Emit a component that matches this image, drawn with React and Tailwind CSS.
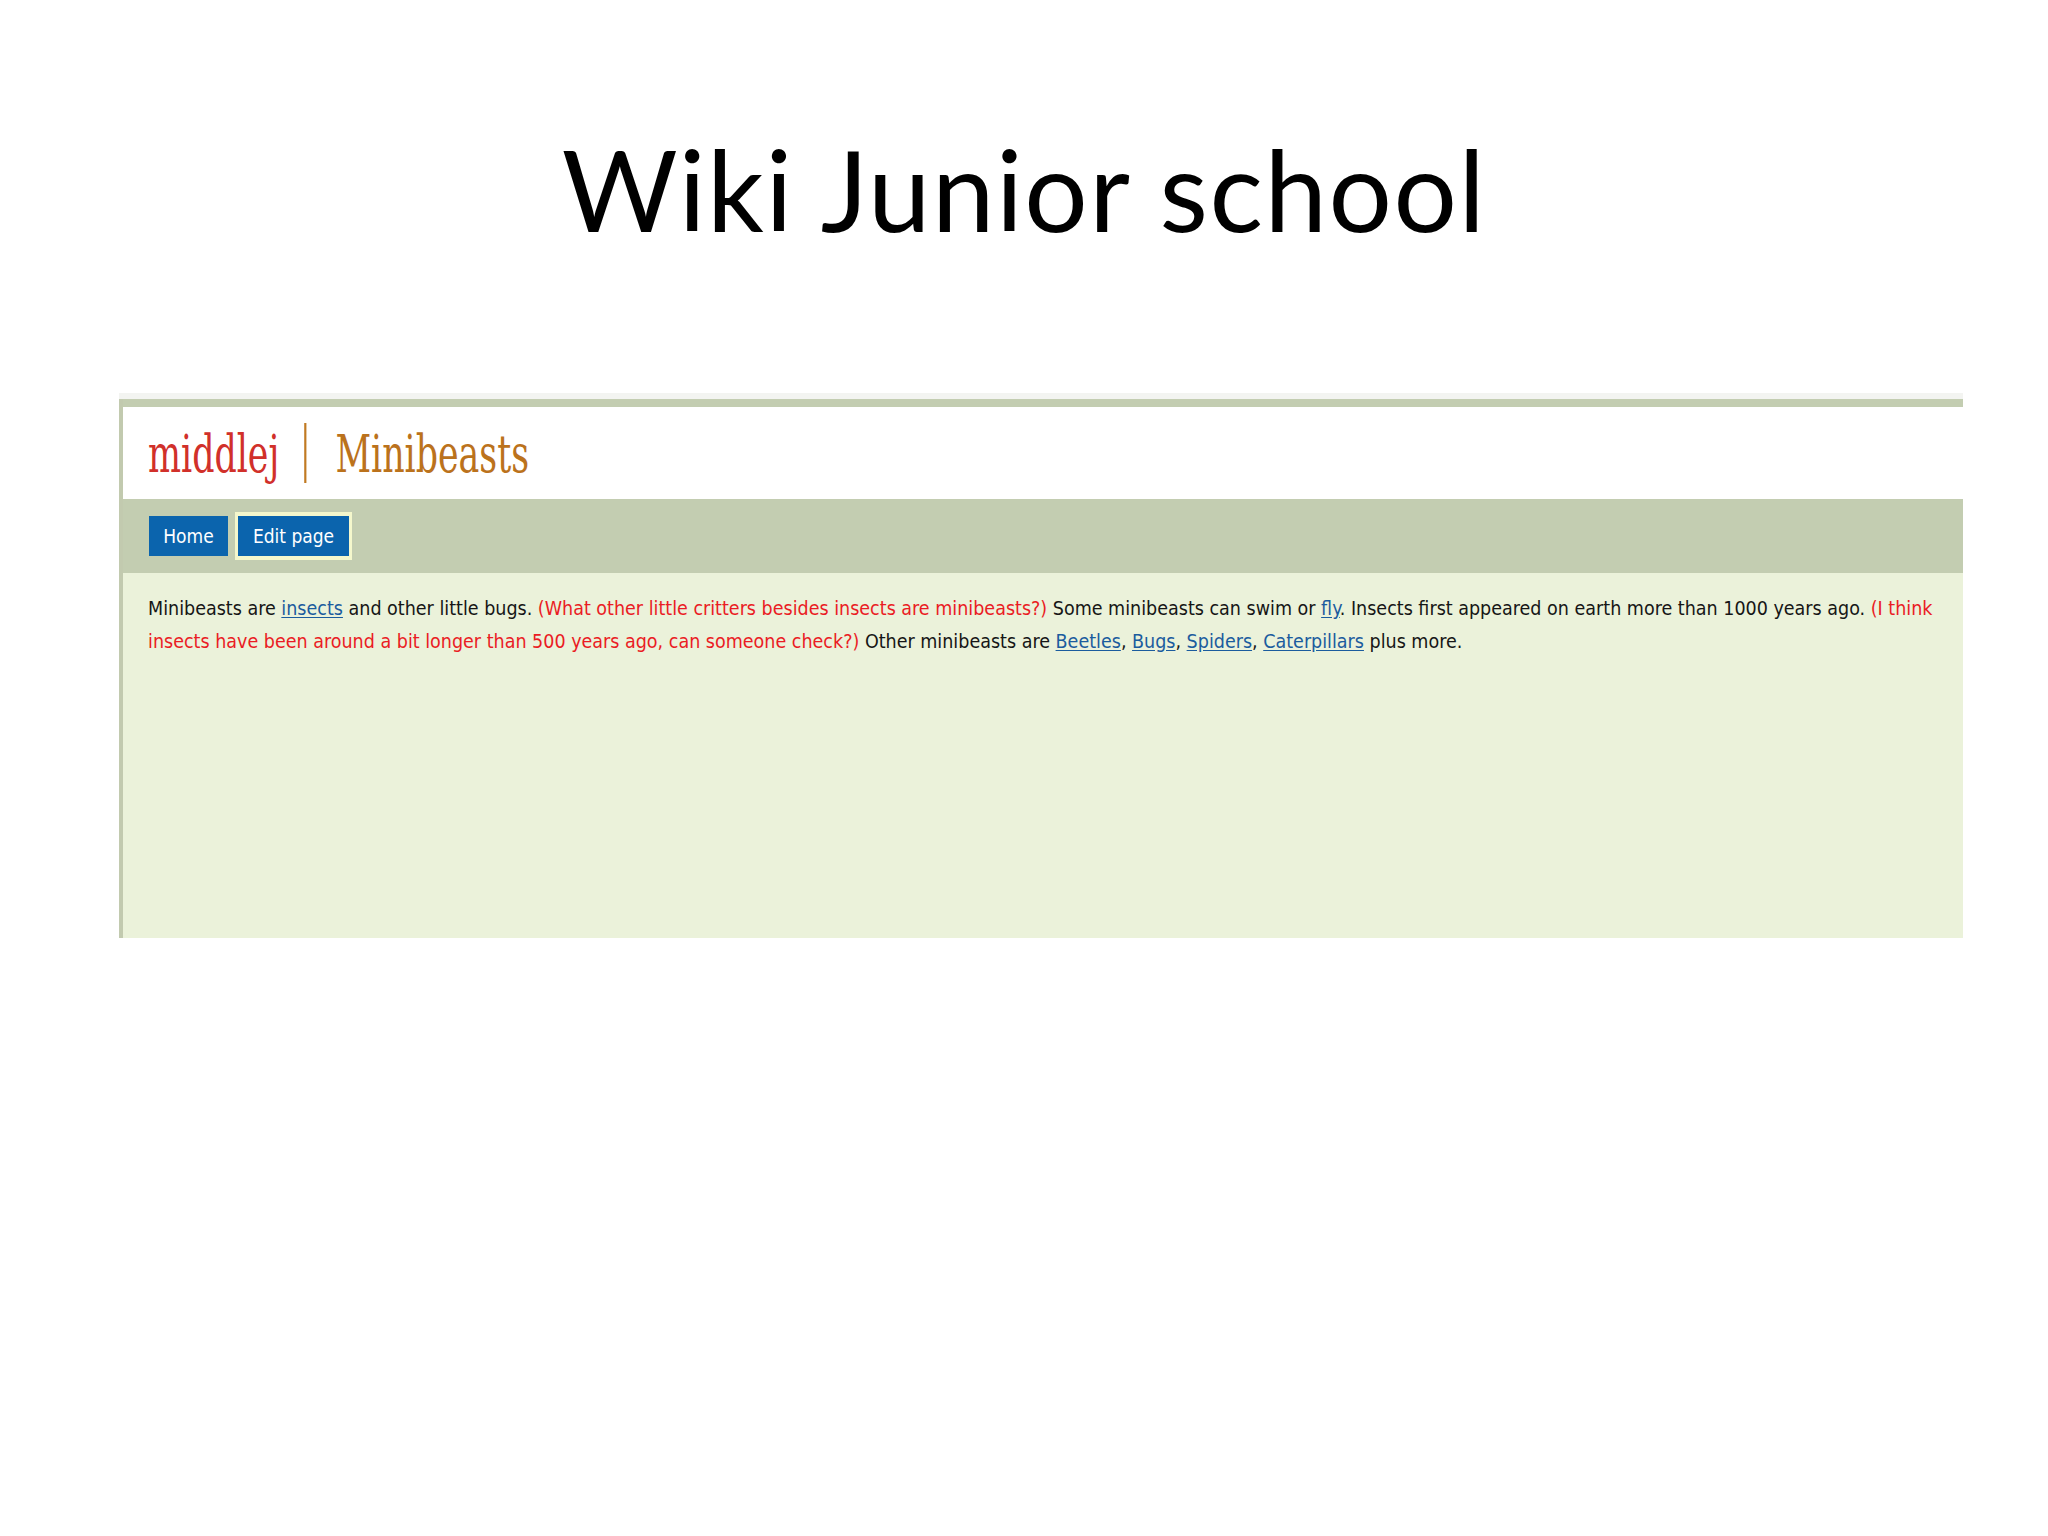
import React from 'react';

const sans = { fontFamily: '"DejaVu Sans Condensed", "DejaVu Sans", sans-serif' };

function Link({ children }) {
  return <a href="#" className="text-[#1b5c9e] underline underline-offset-2">{children}</a>;
}

function Note({ children }) {
  return <span className="text-[#ea1c24]">{children}</span>;
}

export default function App() {
  return (
    <div className="w-[2048px] h-[1536px] bg-white overflow-hidden">
      <div className="h-[393px] pt-[133px]">
        <h1 className="text-center text-[112px] leading-[112px] tracking-[1.5px] text-black font-['Lato',sans-serif]">
          Wiki Junior school
        </h1>
      </div>

      <div className="ml-[119px] w-[1844px]">
        <div className="h-[6px] bg-[#f3f4f1]" />
        <div className="border-l-4 border-[#c2caaf]">
          <div className="h-[8px] bg-[#c3cdb1]" />

          {/* title bar */}
          <div className="h-[92px] bg-white flex items-center pl-[25px]">
            <div className="flex items-center origin-left scale-x-[0.73] font-['DejaVu_Serif_Condensed','DejaVu_Serif',serif] text-[53px] leading-[53px]">
              <span className="text-[#d1302a]">middlej</span>
              <span className="ml-[34px] mr-[40px] h-[60px] w-[3px] bg-[#c17a22]" />
              <span className="text-[#bb721c]">Minibeasts</span>
            </div>
          </div>

          {/* nav */}
          <div className="h-[74px] bg-[#c3cdb1] flex items-center pl-[26px] gap-[7px]" style={sans}>
            <a href="#" className="w-[79px] h-[40px] flex items-center justify-center bg-[#0b64ad] text-white text-[19px]">Home</a>
            <a href="#" className="w-[117px] h-[48px] flex items-center justify-center bg-[#0b64ad] text-white text-[19px] border-x-[3px] border-y-4 border-[#f4f7cc]">Edit page</a>
          </div>

          {/* page body */}
          <div className="h-[365px] bg-[#ebf2da] pl-[25px] pr-[20px] pt-[19px] text-[19.5px] leading-[33px] text-[#161616]" style={sans}>
            <p>
              Minibeasts are <Link>insects</Link> and other little bugs.{' '}
              <Note>(What other little critters besides insects are minibeasts?)</Note> Some minibeasts can swim or{' '}
              <Link>fly</Link>. Insects first appeared on earth more than 1000 years ago. <Note>(I think</Note>
              <br />
              <Note>insects have been around a bit longer than 500 years ago, can someone check?)</Note> Other minibeasts are{' '}
              <Link>Beetles</Link>, <Link>Bugs</Link>, <Link>Spiders</Link>, <Link>Caterpillars</Link> plus more.
            </p>
          </div>
        </div>
      </div>
    </div>
  );
}
